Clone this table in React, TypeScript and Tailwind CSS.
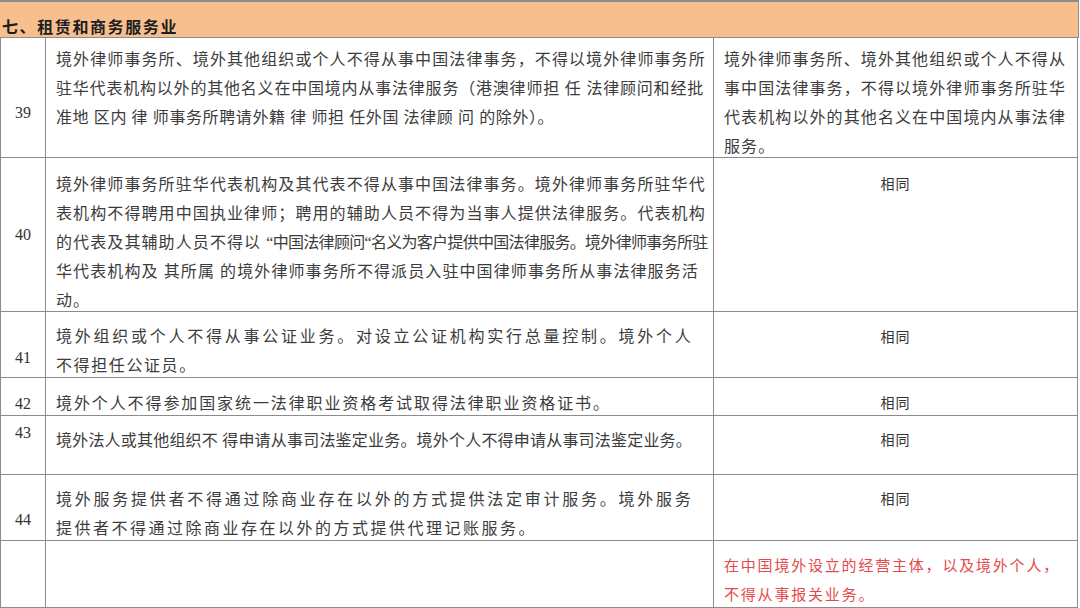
import React from "react";

const F = { fontFamily: '"Liberation Serif", "Noto Sans CJK SC", serif' };

type Line = { t: React.ReactNode; c: string };

function Row({
  h,
  num,
  numPad,
  textPad,
  lines,
  right,
  rightPad,
  rightCenter,
}: {
  h: string;
  num: string;
  numPad: string;
  textPad: string;
  lines: Line[];
  right: React.ReactNode;
  rightPad: string;
  rightCenter?: boolean;
}) {
  return (
    <div className={`grid grid-cols-[46px_668px_364px] grid-rows-[minmax(0,1fr)] ${h}`}>
      <div className={`border-l border-r border-b border-[#8c8c8c] text-center text-[16px] leading-[29px] text-[#333] ${numPad}`}>
        {num}
      </div>
      <div className={`border-r border-b border-[#8c8c8c] pl-[10px] text-[16px] leading-[29px] text-[#3c3c3c] whitespace-nowrap ${textPad}`}>
        {lines.map((l, i) => (
          <div key={i} className={l.c}>
            {l.t}
          </div>
        ))}
      </div>
      <div
        className={`border-r border-b border-[#8c8c8c] ${rightCenter ? "text-center" : "pl-[10px]"} ${rightPad}`}
      >
        {right}
      </div>
    </div>
  );
}

const Same = () => (
  <div className="text-[14px] leading-[29px] tracking-[1px] text-[#333]">相同</div>
);

export default function App() {
  return (
    <div className="w-[1080px] h-[608px] bg-white overflow-hidden" style={F}>
      <div className="h-[38px] w-[1079px] bg-[#f8bf8e] border-t-2 border-b border-r border-[#8c8c8c] pl-[2px] pt-[13px] text-[16px] leading-[26px] tracking-[1.6px] font-semibold text-[#1e1e1e] whitespace-nowrap">
        七、租赁和商务服务业
      </div>
      <Row
        h="h-[120px]"
        num="39"
        numPad="pt-[60px]"
        textPad="pt-[7px]"
        lines={[
          { t: "境外律师事务所、境外其他组织或个人不得从事中国法律事务，不得以境外律师事务所", c: "tracking-[1.1px]" },
          { t: "驻华代表机构以外的其他名义在中国境内从事法律服务（港澳律师担 任 法律顾问和经批", c: "tracking-[0.8px]" },
          { t: "准地 区内 律 师事务所聘请外籍 律 师担 任外国 法律顾 问 的除外）。", c: "tracking-[0.6px]" },
        ]}
        rightPad="pt-[7px]"
        right={
          <div className="text-[16px] leading-[29px] tracking-[1.1px] text-[#3c3c3c] whitespace-nowrap">
            <div>境外律师事务所、境外其他组织或个人不得从</div>
            <div>事中国法律事务，不得以境外律师事务所驻华</div>
            <div>代表机构以外的其他名义在中国境内从事法律</div>
            <div>服务。</div>
          </div>
        }
      />
      <Row
        h="h-[154px]"
        num="40"
        numPad="pt-[62px]"
        textPad="pt-[12px]"
        lines={[
          { t: "境外律师事务所驻华代表机构及其代表不得从事中国法律事务。境外律师事务所驻华代", c: "tracking-[1.1px]" },
          { t: "表机构不得聘用中国执业律师；聘用的辅助人员不得为当事人提供法律服务。代表机构", c: "tracking-[1.1px]" },
          {
            t: (
              <>
                的代表及其辅助人员不得以 <span className="tracking-[-0.7px]">“中国法律顾问“名义为客户提供中国法律服务。境外律师事务所驻</span>
              </>
            ),
            c: "tracking-[1.1px]",
          },
          { t: "华代表机构及 其所属 的境外律师事务所不得派员入驻中国律师事务所从事法律服务活", c: "tracking-[1.1px]" },
          { t: "动。", c: "tracking-[1.1px]" },
        ]}
        rightPad="pt-[12px]"
        rightCenter
        right={<Same />}
      />
      <Row
        h="h-[66px]"
        num="41"
        numPad="pt-[31px]"
        textPad="pt-[10px]"
        lines={[
          { t: "境外组织或个人不得从事公证业务。对设立公证机构实行总量控制。境外个人", c: "tracking-[2.75px]" },
          { t: "不得担任公证员。", c: "tracking-[1.6px]" },
        ]}
        rightPad="pt-[11px]"
        rightCenter
        right={<Same />}
      />
      <Row
        h="h-[38px]"
        num="42"
        numPad="pt-[11px]"
        textPad="pt-[11px]"
        lines={[{ t: "境外个人不得参加国家统一法律职业资格考试取得法律职业资格证书。", c: "tracking-[1.9px]" }]}
        rightPad="pt-[11px]"
        rightCenter
        right={<Same />}
      />
      <Row
        h="h-[59px]"
        num="43"
        numPad="pt-[2px]"
        textPad="pt-[10px]"
        lines={[{ t: "境外法人或其他组织不 得申请从事司法鉴定业务。境外个人不得申请从事司法鉴定业务。", c: "tracking-[0.2px]" }]}
        rightPad="pt-[10px]"
        rightCenter
        right={<Same />}
      />
      <Row
        h="h-[66px]"
        num="44"
        numPad="pt-[30px]"
        textPad="pt-[10px]"
        lines={[
          { t: "境外服务提供者不得通过除商业存在以外的方式提供法定审计服务。境外服务", c: "tracking-[2.75px]" },
          { t: "提供者不得通过除商业存在以外的方式提供代理记账服务。", c: "tracking-[2.5px]" },
        ]}
        rightPad="pt-[10px]"
        rightCenter
        right={<Same />}
      />
      <Row
        h="h-[67px]"
        num=""
        numPad=""
        textPad=""
        lines={[]}
        rightPad="pt-[11px]"
        right={
          <div className="text-[15px] leading-[29px] tracking-[1.8px] text-[#e34b4b] whitespace-nowrap">
            <div>在中国境外设立的经营主体，以及境外个人，</div>
            <div>不得从事报关业务。</div>
          </div>
        }
      />
    </div>
  );
}
